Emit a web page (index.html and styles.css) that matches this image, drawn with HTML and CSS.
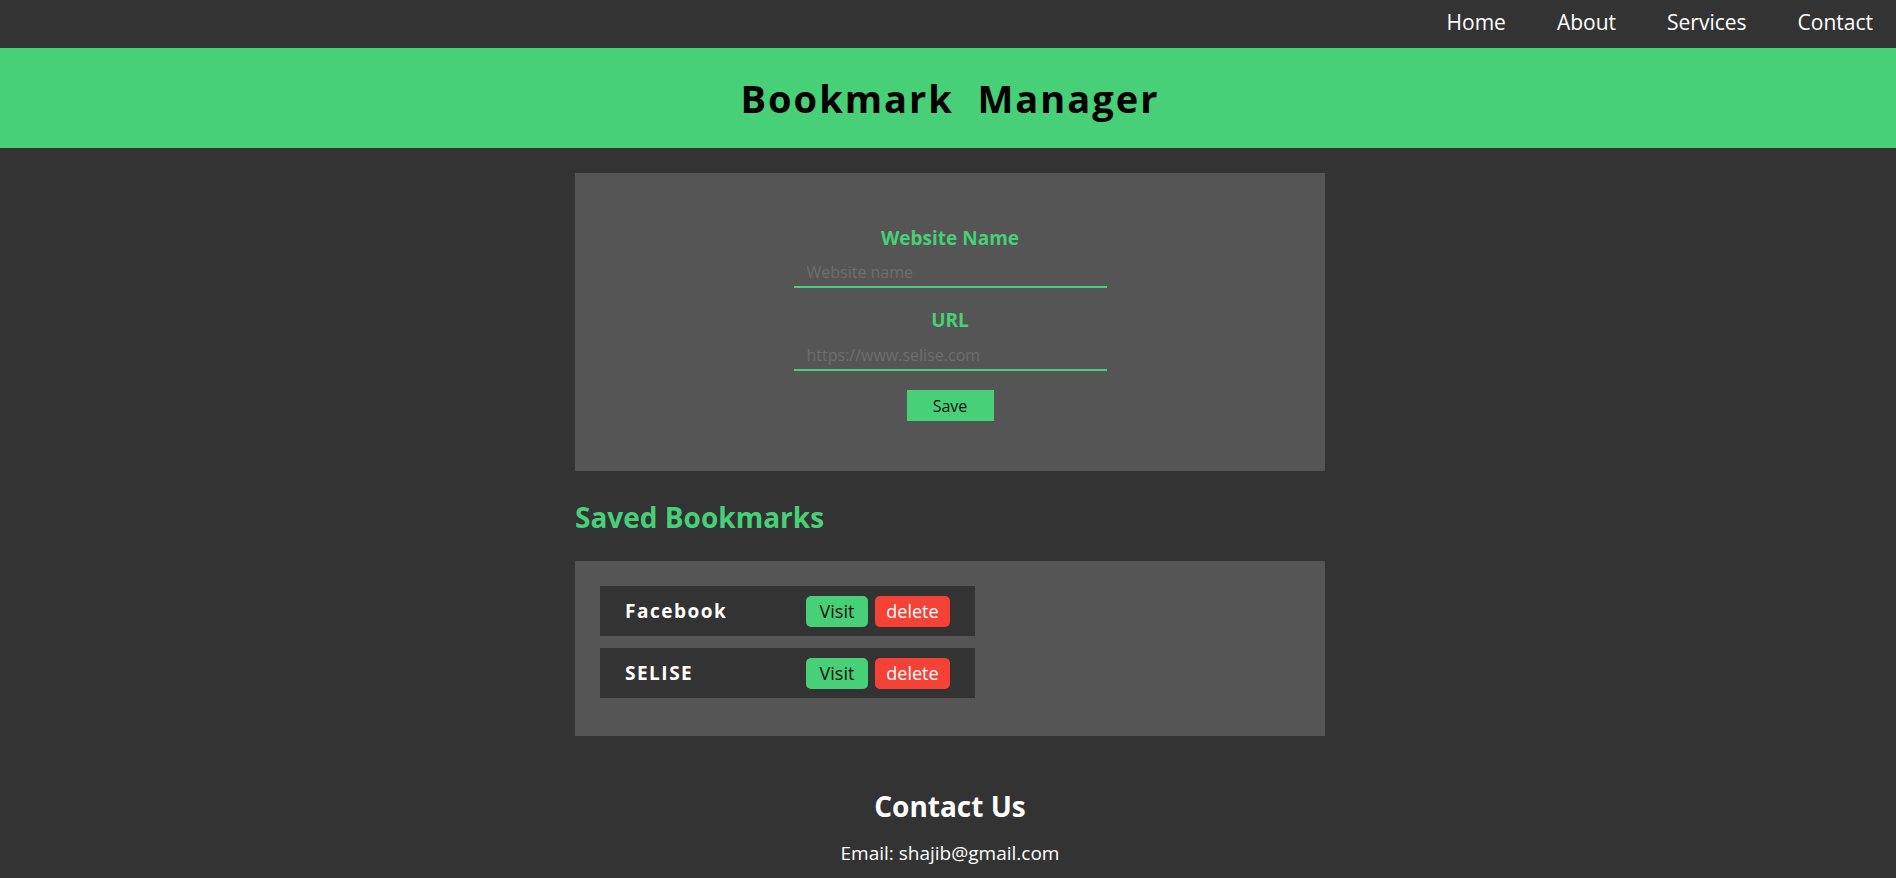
FILE: index.html
```html
<!DOCTYPE html>
<html lang="en">
<head>
<meta charset="utf-8">
<title>Bookmark Manager</title>
<link rel="stylesheet" href="styles.css">
</head>
<body>
<nav class="topnav">
  <a class="nav-link" href="#">Home</a>
  <a class="nav-link" href="#">About</a>
  <a class="nav-link" href="#">Services</a>
  <a class="nav-link" href="#">Contact</a>
</nav>
<header class="banner">
  <h1 class="banner-title">Bookmark&nbsp; Manager</h1>
</header>
<main class="page">
  <form class="add-form">
    <label class="field-label" for="site-name">Website Name</label>
    <input class="field-input" id="site-name" type="text" placeholder="Website name">
    <label class="field-label field-label-next" for="site-url">URL</label>
    <input class="field-input field-input-url" id="site-url" type="text" placeholder="https://www.selise.com">
    <button class="save-btn" type="button">Save</button>
  </form>
  <h2 class="saved-title">Saved Bookmarks</h2>
  <section class="bookmarks">
    <div class="bookmark-row">
      <span class="bookmark-name">Facebook</span>
      <span class="bookmark-actions">
        <button class="btn btn-visit" type="button">Visit</button>
        <button class="btn btn-delete" type="button">delete</button>
      </span>
    </div>
    <div class="bookmark-row">
      <span class="bookmark-name">SELISE</span>
      <span class="bookmark-actions">
        <button class="btn btn-visit" type="button">Visit</button>
        <button class="btn btn-delete" type="button">delete</button>
      </span>
    </div>
  </section>
</main>
<footer class="contact">
  <h3 class="contact-title">Contact Us</h3>
  <p class="contact-email">Email: shajib@gmail.com</p>
</footer>
</body>
</html>
```

FILE: styles.css
```css
* { box-sizing: border-box; }

html, body {
  margin: 0;
  padding: 0;
}

body {
  background: #333333;
  font-family: "Open Sans", "Noto Sans", sans-serif;
  color: #ffffff;
  overflow: hidden;
}

.topnav {
  height: 48px;
  display: flex;
  justify-content: flex-end;
  align-items: flex-start;
  padding-top: 7px;
  padding-right: 23px;
}

.nav-link {
  color: #ffffff;
  text-decoration: none;
  font-size: 21px;
  line-height: 30px;
  padding: 0 0 0 51px;
}

.banner {
  height: 100px;
  background: #47d077;
  display: flex;
  align-items: center;
  justify-content: center;
  padding-left: 4px;
}

.banner-title {
  margin: 0;
  font-size: 38px;
  line-height: 50px;
  font-weight: 700;
  letter-spacing: 2px;
  color: #000000;
}

.page {
  width: 750px;
  margin: 25px auto 0;
  position: relative;
  left: 2px;
}

.add-form {
  background: #555555;
  display: flex;
  flex-direction: column;
  align-items: center;
  padding: 53px 0 50px;
}

.field-label {
  font-size: 19px;
  line-height: 24px;
  font-weight: 700;
  color: #47d077;
}

.field-label-next {
  margin-top: 20px;
}

.field-input {
  margin-top: 4px;
  width: 313px;
  height: 34px;
  background: transparent;
  border: none;
  border-bottom: 2px solid #47d077;
  outline: none;
  padding: 4px 13px 0;
  font-family: inherit;
  font-size: 16px;
  color: #dddddd;
}

.field-input-url {
  margin-top: 5px;
}

.field-input::placeholder {
  color: #6e6e6e;
}

.save-btn {
  margin-top: 19px;
  width: 87px;
  height: 31px;
  border: none;
  background: #47d077;
  color: #111111;
  font-family: inherit;
  font-size: 16px;
  padding: 0;
}

.saved-title {
  margin: 28px 0 26px;
  font-size: 28px;
  line-height: 36px;
  font-weight: 700;
  color: #47d077;
}

.bookmarks {
  background: #555555;
  padding: 25px 25px 26px;
}

.bookmark-row {
  width: 375px;
  height: 50px;
  background: #333333;
  margin-bottom: 12px;
  padding: 0 25px;
  display: flex;
  align-items: center;
  justify-content: space-between;
}

.bookmark-name {
  font-size: 19px;
  font-weight: 700;
  letter-spacing: 1.5px;
  color: #ffffff;
}

.bookmark-actions {
  display: flex;
  gap: 7px;
}

.btn {
  height: 31px;
  border: none;
  border-radius: 5px;
  font-family: inherit;
  font-size: 18px;
  padding: 0;
  line-height: 31px;
}

.btn-visit {
  width: 62px;
  background: #47d077;
  color: #111111;
}

.btn-delete {
  width: 75px;
  background: #f44336;
  color: #ffffff;
}

.contact {
  text-align: center;
  padding-top: 52px;
  padding-left: 4px;
}

.contact-title {
  margin: 0;
  font-size: 28px;
  line-height: 36px;
  font-weight: 700;
}

.contact-email {
  margin: 16px 0 0;
  font-size: 19px;
  line-height: 26px;
}
```
